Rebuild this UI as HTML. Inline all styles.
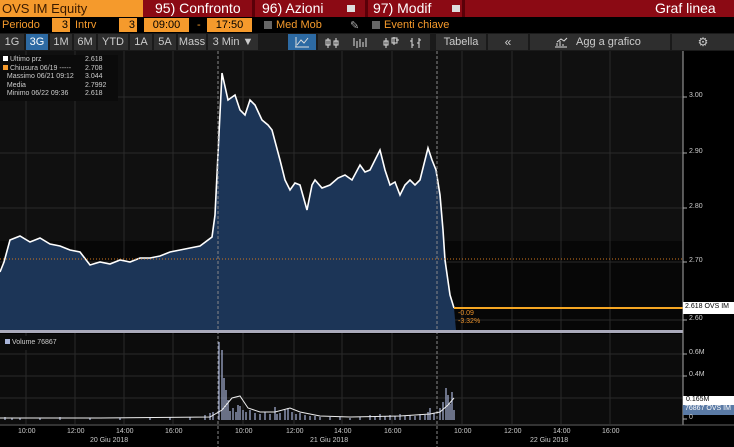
<!DOCTYPE html>
<html><head><meta charset="utf-8"><style>
*{margin:0;padding:0;box-sizing:border-box}
body{width:734px;height:447px;background:#000;overflow:hidden;font-family:"Liberation Sans",sans-serif;position:relative}
.a{position:absolute;white-space:nowrap}
</style></head><body>
<div class="a" style="left:0;top:0;width:734px;height:17px;background:#8b0a14"></div>
<div class="a" style="left:0;top:0;width:143px;height:17px;background:#f59a2c;color:#3a1a00;font-size:13px;line-height:17px;padding-left:2px">OVS IM Equity</div>
<div class="a" style="left:252px;top:0;width:3px;height:17px;background:#5a0008"></div>
<div class="a" style="left:365px;top:0;width:3px;height:17px;background:#5a0008"></div>
<div class="a" style="left:462px;top:0;width:3px;height:17px;background:#5a0008"></div>
<div class="a" style="left:155px;top:0;color:#fff;font-size:14px;line-height:17px">95) Confronto</div>
<div class="a" style="left:262px;top:0;color:#fff;font-size:14px;line-height:17px">96) Azioni</div>
<div class="a" style="left:347px;top:5px;width:8px;height:7px;background:#ddd"></div>
<div class="a" style="left:373px;top:0;color:#fff;font-size:14px;line-height:17px">97) Modif</div>
<div class="a" style="left:452px;top:5px;width:8px;height:7px;background:#ddd"></div>
<div class="a" style="left:655px;top:0;color:#fff;font-size:14px;line-height:17px">Graf linea</div>
<div class="a" style="left:2px;top:17px;color:#f59a2c;font-size:11px;line-height:16px">Periodo</div>
<div class="a" style="left:52px;top:18px;width:18px;height:14px;background:#f59a2c;color:#000;font-size:11px;line-height:14px;text-align:right;padding-right:2px">3</div>
<div class="a" style="left:75px;top:17px;color:#f59a2c;font-size:11px;line-height:16px">Intrv</div>
<div class="a" style="left:119px;top:18px;width:18px;height:14px;background:#f59a2c;color:#000;font-size:11px;line-height:14px;text-align:right;padding-right:2px">3</div>
<div class="a" style="left:144px;top:18px;width:45px;height:14px;background:#f59a2c;color:#000;font-size:11px;line-height:14px;text-align:center">09:00</div>
<div class="a" style="left:197px;top:17px;color:#f59a2c;font-size:11px;line-height:16px">-</div>
<div class="a" style="left:207px;top:18px;width:45px;height:14px;background:#f59a2c;color:#000;font-size:11px;line-height:14px;text-align:center">17:50</div>
<div class="a" style="left:264px;top:21px;width:8px;height:8px;background:#666"></div>
<div class="a" style="left:276px;top:17px;color:#f59a2c;font-size:11px;line-height:16px">Med Mob</div>
<div class="a" style="left:350px;top:19px;color:#aaa;font-size:11px;line-height:14px">&#9998;</div>
<div class="a" style="left:372px;top:21px;width:8px;height:8px;background:#666"></div>
<div class="a" style="left:384px;top:17px;color:#f59a2c;font-size:11px;line-height:16px">Eventi chiave</div>
<div class="a" style="left:0;top:33px;width:734px;height:18px;background:#1a1a1a"></div>
<div class="a" style="left:0;top:34px;font-size:11px;line-height:16px;color:#ccc;display:flex;gap:2px">
<span style="background:#2e2e2e;width:24px;text-align:center">1G</span><span style="background:#2d6aa3;color:#fff;width:22px;text-align:center">3G</span><span style="background:#2e2e2e;width:22px;text-align:center">1M</span><span style="background:#2e2e2e;width:22px;text-align:center">6M</span><span style="background:#2e2e2e;width:30px;text-align:center">YTD</span><span style="background:#2e2e2e;width:22px;text-align:center">1A</span><span style="background:#2e2e2e;width:22px;text-align:center">5A</span><span style="background:#2e2e2e;width:28px;text-align:center">Mass</span><span style="background:#2e2e2e;width:50px;text-align:center">3 Min &#9660;</span></div>
<div class="a" style="left:288px;top:34px;width:28px;height:16px;background:#2d6aa3"></div>
<div class="a" style="left:318px;top:34px;width:112px;height:16px;background:#2e2e2e"></div>
<div class="a" style="left:436px;top:34px;width:50px;height:16px;background:#2e2e2e;color:#ccc;font-size:11px;line-height:16px;text-align:center">Tabella</div>
<div class="a" style="left:488px;top:34px;width:40px;height:16px;background:#2e2e2e;color:#ccc;font-size:12px;line-height:16px;text-align:center">&laquo;</div>
<div class="a" style="left:530px;top:34px;width:140px;height:16px;background:#2e2e2e;color:#ccc;font-size:11px;line-height:16px;padding-left:46px">Agg a grafico</div>
<div class="a" style="left:672px;top:34px;width:62px;height:16px;background:#2e2e2e;color:#ccc;font-size:12px;line-height:16px;text-align:center">&#9881;</div>
<svg class="a" style="left:0;top:0" width="734" height="447" viewBox="0 0 734 447">
<g fill="none" stroke="#ddd" stroke-width="1">
<path d="M295 47h14M296 47v-10M297 45l4-5 3 3 4-5"/>
<path d="M328 38v10M326 40h4v5h-4zM336 38v10M334 41h4v4h-4z"/>
<path d="M354 38v8M357 41v7M360 39v8M363 42v5M366 38v9"/>
<path d="M386 38v10M384 41h4v4h-4zM394 37v8M392 38h5v5h-5zM396 40h3"/>
<path d="M412 38v10M410 41h2M412 45h2M419 38v10M417 43h2M419 40h2"/>
<path d="M555 47h12M557 46v-3M560 46v-5M563 46v-2M557 42l4-3 3 2 3-3"/>
</g>
<rect x="0" y="51" width="683" height="190" fill="#101010"/>
<rect x="0" y="241" width="683" height="89" fill="#070707"/>
<rect x="0" y="334" width="683" height="90" fill="#0c0c0c"/>
<g stroke="#2a2a2a" stroke-width="1">
<line x1="0" y1="97" x2="683" y2="97"/><line x1="0" y1="153" x2="683" y2="153"/><line x1="0" y1="208" x2="683" y2="208"/><line x1="0" y1="262" x2="683" y2="262"/><line x1="0" y1="320" x2="683" y2="320"/>
<line x1="0" y1="354" x2="683" y2="354"/><line x1="0" y1="376" x2="683" y2="376"/><line x1="0" y1="398" x2="683" y2="398"/>
<line x1="26" y1="51" x2="26" y2="424"/><line x1="75" y1="51" x2="75" y2="424"/><line x1="124" y1="51" x2="124" y2="424"/><line x1="173" y1="51" x2="173" y2="424"/>
<line x1="243" y1="51" x2="243" y2="424"/><line x1="294" y1="51" x2="294" y2="424"/><line x1="342" y1="51" x2="342" y2="424"/><line x1="392" y1="51" x2="392" y2="424"/>
<line x1="462" y1="51" x2="462" y2="424"/><line x1="512" y1="51" x2="512" y2="424"/><line x1="561" y1="51" x2="561" y2="424"/><line x1="610" y1="51" x2="610" y2="424"/>
</g>
<polygon fill="#1c3557" points="0,272 4,262 10,240 20,236 30,242 40,238 50,244 60,246 70,250 80,252 90,265 100,262 110,264 120,260 130,262 140,258 150,258 160,256 170,252 180,250 190,248 200,246 212,237 215,215 222,73 228,100 235,95 240,110 245,115 250,100 255,105 262,120 268,125 272,130 276,145 280,160 285,180 290,190 295,183 300,185 307,210 312,185 315,180 322,188 330,185 338,178 345,175 352,180 360,165 365,172 370,170 375,160 380,150 385,170 390,185 395,182 400,195 405,185 410,180 415,185 420,180 428,148 432,160 436,170 440,195 443,230 445,260 450,295 454,308 456,330 0,330"/>
<polyline fill="none" stroke="#fff" stroke-width="1.6" points="0,272 4,262 10,240 20,236 30,242 40,238 50,244 60,246 70,250 80,252 90,265 100,262 110,264 120,260 130,262 140,258 150,258 160,256 170,252 180,250 190,248 200,246 212,237 215,215 222,73 228,100 235,95 240,110 245,115 250,100 255,105 262,120 268,125 272,130 276,145 280,160 285,180 290,190 295,183 300,185 307,210 312,185 315,180 322,188 330,185 338,178 345,175 352,180 360,165 365,172 370,170 375,160 380,150 385,170 390,185 395,182 400,195 405,185 410,180 415,185 420,180 428,148 432,160 436,170 440,195 443,230 445,260 450,295 454,308"/>
<line x1="0" y1="259" x2="683" y2="259" stroke="#d2771f" stroke-dasharray="1,2"/>
<line x1="454" y1="308" x2="683" y2="308" stroke="#f5a623" stroke-width="2"/>
<line x1="218" y1="51" x2="218" y2="447" stroke="#888" stroke-dasharray="3,2"/>
<line x1="437" y1="51" x2="437" y2="447" stroke="#888" stroke-dasharray="3,2"/>
<rect x="0" y="330" width="683" height="3" fill="#aab"/>
<line x1="683" y1="51" x2="683" y2="425" stroke="#aaa"/>
<g stroke="#aaa"><path d="M683 97h4M683 153h4M683 208h4M683 262h4M683 320h4M683 354h4M683 376h4M683 419h4"/></g>
<line x1="0" y1="425" x2="734" y2="425" stroke="#666"/>
<g stroke="#a8b4d8" stroke-width="1.2">
<path d="M5 420v-3M12 420v-2M20 420v-2M40 420v-2M60 420v-3M90 420v-2M120 420v-2M150 420v-3M170 420v-3M190 420v-3M205 420v-5M210 420v-7M213 420v-8M219 420v-78M222 420v-70M224 420v-42M226 420v-30M228 420v-20M230 420v-9M233 420v-12M236 420v-8M238 420v-15M240 420v-14M243 420v-10M246 420v-8M250 420v-10M255 420v-7M260 420v-6M265 420v-8M270 420v-6M275 420v-13M277 420v-6M280 420v-7M285 420v-10M288 420v-12M292 420v-8M296 420v-6M300 420v-7M305 420v-5M310 420v-4M315 420v-4M320 420v-3M330 420v-3M340 420v-3M350 420v-2M360 420v-3M370 420v-5M375 420v-4M380 420v-6M385 420v-4M390 420v-5M395 420v-4M400 420v-6M405 420v-4M410 420v-5M415 420v-4M420 420v-6M425 420v-5M428 420v-8M430 420v-12M434 420v-7M440 420v-12M443 420v-18M446 420v-32M448 420v-25M450 420v-16M452 420v-28M454 420v-10"/>
</g>
<polyline fill="none" stroke="#eee" stroke-width="1" points="0,418 100,418 210,417 222,410 232,398 240,396 248,408 260,412 275,412 290,408 300,412 320,416 350,417 400,416 430,414 440,412 448,405 454,398"/>
<rect x="0" y="55" width="118" height="46" fill="#0b0b0b"/>
<rect x="0" y="336" width="70" height="14" fill="#0b0b0b"/>
<rect x="683" y="302" width="51" height="12" fill="#fff"/>
<rect x="683" y="396" width="51" height="9" fill="#fff"/>
<rect x="683" y="405" width="51" height="10" fill="#5a7aa5"/>
</svg>
<div class="a" style="left:3px;top:56px;font-size:7px;line-height:8.5px;color:#ccc">
<div><span style="display:inline-block;width:5px;height:5px;background:#fff"></span> Ultimo prz<span class="a" style="left:82px">2.618</span></div>
<div><span style="display:inline-block;width:5px;height:5px;background:#f59a2c"></span> Chiusura 06/19 -----<span class="a" style="left:82px">2.708</span></div>
<div>&nbsp; Massimo 06/21 09:12<span class="a" style="left:82px">3.044</span></div>
<div>&nbsp; Media<span class="a" style="left:82px">2.7992</span></div>
<div>&nbsp; Minimo 06/22 09:36<span class="a" style="left:82px">2.618</span></div>
</div>
<div class="a" style="left:5px;top:339px;font-size:7px;color:#ccc"><span style="display:inline-block;width:5px;height:5px;background:#a8b4d8"></span> Volume 76867</div>
<div class="a" style="left:458px;top:310px;font-size:7px;color:#e8902a;line-height:8px">-0.09<br>-3.32%</div>
<div class="a" style="left:689px;top:92px;font-size:7px;color:#ccc">3.00</div>
<div class="a" style="left:689px;top:148px;font-size:7px;color:#ccc">2.90</div>
<div class="a" style="left:689px;top:203px;font-size:7px;color:#ccc">2.80</div>
<div class="a" style="left:689px;top:257px;font-size:7px;color:#ccc">2.70</div>
<div class="a" style="left:689px;top:315px;font-size:7px;color:#ccc">2.60</div>
<div class="a" style="left:685px;top:303px;font-size:7px;color:#000">2.618 OVS IM</div>
<div class="a" style="left:689px;top:349px;font-size:7px;color:#ccc">0.6M</div>
<div class="a" style="left:689px;top:371px;font-size:7px;color:#ccc">0.4M</div>
<div class="a" style="left:686px;top:396px;font-size:7px;color:#000">0.165M</div>
<div class="a" style="left:685px;top:405px;font-size:7px;color:#fff">76867 OVS IM</div>
<div class="a" style="left:689px;top:414px;font-size:7px;color:#ccc">0</div>
<div class="a" style="top:428px;left:0;width:734px;font-size:7px;color:#ccc">
<span class="a" style="left:18px">10:00</span><span class="a" style="left:67px">12:00</span><span class="a" style="left:116px">14:00</span><span class="a" style="left:165px">16:00</span>
<span class="a" style="left:235px">10:00</span><span class="a" style="left:286px">12:00</span><span class="a" style="left:334px">14:00</span><span class="a" style="left:384px">16:00</span>
<span class="a" style="left:454px">10:00</span><span class="a" style="left:504px">12:00</span><span class="a" style="left:553px">14:00</span><span class="a" style="left:602px">16:00</span>
<span class="a" style="left:90px;top:9px">20 Giu 2018</span><span class="a" style="left:310px;top:9px">21 Giu 2018</span><span class="a" style="left:530px;top:9px">22 Giu 2018</span>
</div>
</body></html>
